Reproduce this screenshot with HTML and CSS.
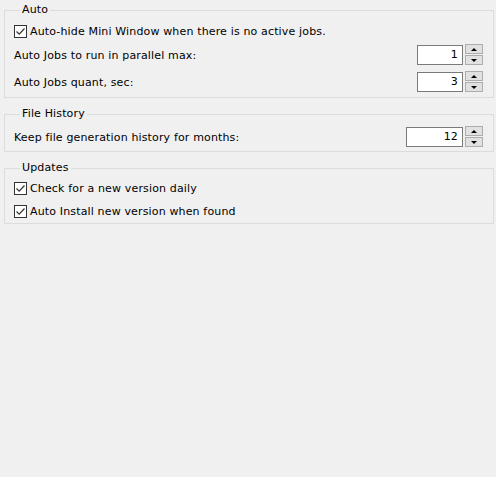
FILE: index.html
```html
<!DOCTYPE html>
<html>
<head>
<meta charset="utf-8">
<link rel="stylesheet" href="styles.css">
</head>
<body>
<div class="page">
  <fieldset class="group group-auto">
    <legend>Auto</legend>
    <label class="check-row">
      <span class="box"><svg viewBox="0 0 11 11" width="11" height="11"><path d="M1.5 5.5 L4.2 8.2 L9.5 2.5" fill="none" stroke="#333" stroke-width="1.2"/></svg></span>
      <span>Auto-hide Mini Window when there is no active jobs.</span>
    </label>
    <div class="spin-row">
      <span class="label">Auto Jobs to run in parallel max:</span>
      <div class="spin">
        <div class="field">1</div>
        <div class="buttons">
          <span class="btn"><span class="tri up"></span></span>
          <span class="btn"><span class="tri down"></span></span>
        </div>
      </div>
    </div>
    <div class="spin-row">
      <span class="label">Auto Jobs quant, sec:</span>
      <div class="spin">
        <div class="field">3</div>
        <div class="buttons">
          <span class="btn"><span class="tri up"></span></span>
          <span class="btn"><span class="tri down"></span></span>
        </div>
      </div>
    </div>
  </fieldset>

  <fieldset class="group group-history">
    <legend>File History</legend>
    <div class="spin-row">
      <span class="label">Keep file generation history for months:</span>
      <div class="spin">
        <div class="field wide">12</div>
        <div class="buttons">
          <span class="btn"><span class="tri up"></span></span>
          <span class="btn"><span class="tri down"></span></span>
        </div>
      </div>
    </div>
  </fieldset>

  <fieldset class="group group-updates">
    <legend>Updates</legend>
    <label class="check-row">
      <span class="box"><svg viewBox="0 0 11 11" width="11" height="11"><path d="M1.5 5.5 L4.2 8.2 L9.5 2.5" fill="none" stroke="#333" stroke-width="1.2"/></svg></span>
      <span>Check for a new version daily</span>
    </label>
    <label class="check-row">
      <span class="box"><svg viewBox="0 0 11 11" width="11" height="11"><path d="M1.5 5.5 L4.2 8.2 L9.5 2.5" fill="none" stroke="#333" stroke-width="1.2"/></svg></span>
      <span>Auto Install new version when found</span>
    </label>
  </fieldset>
</div>
</body>
</html>
```

FILE: styles.css
```css
html, body {
  margin: 0;
  padding: 0;
  background: #f0f0f0;
}
body {
  font-family: "DejaVu Sans", sans-serif;
  font-size: 11px;
  letter-spacing: 0.15px;
  color: #000;
  width: 496px;
  height: 477px;
}
.page {
  padding: 4px 2px 0 4px;
  display: flex;
  flex-direction: column;
  gap: 10px;
}
.group {
  margin: 0;
  border: 1px solid #dcdcdc;
  padding: 9px 10px 5px 9px;
  min-width: 0;
  display: flex;
  flex-direction: column;
}
.group legend {
  margin-left: 6px;
  padding: 0 2px;
  height: 12px;
  line-height: 12px;
}
.group-auto .check-row { margin-bottom: 6px; }
.group-auto .spin-row + .spin-row { margin-top: 6px; }
.group-history { padding-top: 6px; padding-bottom: 4px; }
.group-updates { padding-top: 8px; padding-bottom: 5px; }
.group-updates .check-row + .check-row { margin-top: 10px; }

.check-row {
  display: flex;
  align-items: center;
  height: 13px;
  gap: 3px;
}
.box {
  width: 11px;
  height: 11px;
  border: 1px solid #333;
  background: #fff;
  display: flex;
}
.spin-row {
  display: flex;
  align-items: center;
  justify-content: space-between;
  height: 21px;
}
.label {
  padding-top: 1px;
}
.spin {
  display: flex;
  align-items: center;
  gap: 2px;
}
.field {
  box-sizing: border-box;
  width: 46px;
  height: 20px;
  border: 1px solid #7a7a7a;
  background: #fff;
  text-align: right;
  padding-right: 4px;
  line-height: 18px;
}
.field.wide { width: 57px; }
.buttons {
  display: flex;
  flex-direction: column;
  gap: 1px;
}
.btn {
  box-sizing: border-box;
  width: 18px;
  height: 10px;
  border: 1px solid #adadad;
  background: #e1e1e1;
  display: flex;
  align-items: center;
  justify-content: center;
}
.tri {
  width: 0;
  height: 0;
  border-left: 3px solid transparent;
  border-right: 3px solid transparent;
}
.tri.up { border-bottom: 3px solid #000; }
.tri.down { border-top: 3px solid #000; }
```
